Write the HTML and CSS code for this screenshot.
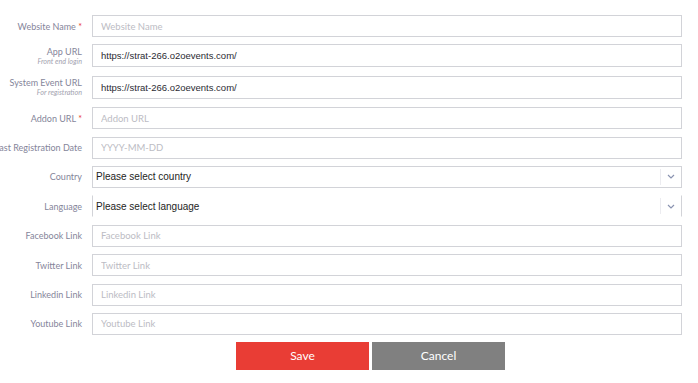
FILE: index.html
```html
<!DOCTYPE html>
<html lang="en">

<head>
    <meta charset="UTF-8">
    <meta name="viewport" content="width=device-width, initial-scale=1.0">
    <title>Website Settings</title>
    <link rel="stylesheet" href="styles.css">
</head>

<body>

    <form class="settings-form">
        <div class="form-row">
            <label class="row-label" for="websiteName"><span>Website Name <b class="req">*</b></span></label>
            <input type="text" id="websiteName" placeholder="Website Name">
        </div>

        <div class="form-row tall">
            <label class="row-label" for="appUrl">
                <span>App URL<small>Front end login</small></span>
            </label>
            <input type="text" id="appUrl" value="https://strat-266.o2oevents.com/">
        </div>

        <div class="form-row tall">
            <label class="row-label" for="eventUrl">
                <span>System Event URL<small>For registration</small></span>
            </label>
            <input type="text" id="eventUrl" value="https://strat-266.o2oevents.com/">
        </div>

        <div class="form-row">
            <label class="row-label" for="addonUrl"><span>Addon URL <b class="req">*</b></span></label>
            <input type="text" id="addonUrl" placeholder="Addon URL">
        </div>

        <div class="form-row">
            <label class="row-label" for="lastDate"><span>Last Registration Date</span></label>
            <input type="text" id="lastDate" placeholder="YYYY-MM-DD">
        </div>

        <div class="form-row">
            <label class="row-label"><span>Country</span></label>
            <div class="select-box">
                <span class="select-text">Please select country</span>
                <span class="select-arrow">
                    <svg width="8" height="5" viewBox="0 0 8 5"><path d="M1 1l3 3 3-3" fill="none" stroke="#8a93b0" stroke-width="1.2"/></svg>
                </span>
            </div>
        </div>

        <div class="form-row">
            <label class="row-label"><span>Language</span></label>
            <div class="select-box open">
                <span class="select-text">Please select language</span>
                <span class="select-arrow">
                    <svg width="8" height="5" viewBox="0 0 8 5"><path d="M1 1l3 3 3-3" fill="none" stroke="#8a93b0" stroke-width="1.2"/></svg>
                </span>
            </div>
        </div>

        <div class="form-row">
            <label class="row-label" for="facebook"><span>Facebook Link</span></label>
            <input type="text" id="facebook" placeholder="Facebook Link">
        </div>

        <div class="form-row">
            <label class="row-label" for="twitter"><span>Twitter Link</span></label>
            <input type="text" id="twitter" placeholder="Twitter Link">
        </div>

        <div class="form-row">
            <label class="row-label" for="linkedin"><span>Linkedin Link</span></label>
            <input type="text" id="linkedin" placeholder="Linkedin Link">
        </div>

        <div class="form-row">
            <label class="row-label" for="youtube"><span>Youtube Link</span></label>
            <input type="text" id="youtube" placeholder="Youtube Link">
        </div>

        <div class="form-actions">
            <button type="button" class="btn save">Save</button>
            <button type="button" class="btn cancel">Cancel</button>
        </div>
    </form>

</body>

</html>
```

FILE: styles.css
```css
body {
    margin: 0;
    background: #fff;
    font-family: 'Lato', 'Liberation Sans', sans-serif;
    overflow: hidden;
}

.settings-form {
    padding: 15px 16px 0 0;
}

.form-row {
    display: grid;
    grid-template-columns: 82px 1fr;
    column-gap: 10px;
    height: 22px;
    margin-bottom: 7.4px;
}

.form-row.tall {
    height: 24px;
}

.row-label {
    display: flex;
    justify-content: flex-end;
    align-items: center;
    white-space: nowrap;
    font-size: 9px;
    color: #85859a;
    text-align: right;
    line-height: 11px;
}

.row-label small {
    display: block;
    font-size: 7.2px;
    font-style: italic;
    color: #a3a3b0;
    line-height: 10px;
}

.req {
    font-weight: normal;
    color: #e93d35;
}

input[type="text"] {
    box-sizing: border-box;
    height: 22px;
    width: 100%;
    border: 1px solid #d2d3d8;
    padding: 0 8px;
    font-family: 'Liberation Sans', sans-serif;
    font-size: 9.5px;
    color: #2b2b33;
    outline: none;
}

.form-row.tall input[type="text"] {
    height: 23px;
}

input::placeholder {
    font-family: 'Lato', sans-serif;
    font-size: 9.5px;
    color: #bcbcc4;
}

.select-box {
    box-sizing: border-box;
    height: 22px;
    display: flex;
    align-items: center;
    border: 1px solid #d2d3d8;
    font-family: 'Liberation Sans', sans-serif;
    font-size: 10px;
    color: #1e1e24;
}

.select-box.open {
    border-top-color: #fff;
    border-bottom-color: #fff;
}

.select-text {
    flex: 1;
    padding-left: 3px;
}

.select-arrow {
    width: 20px;
    height: 16px;
    display: flex;
    align-items: center;
    justify-content: center;
    border-left: 1px solid #ececf0;
}

.form-actions {
    display: flex;
    gap: 3px;
    padding-left: 236px;
    margin-top: -0.4px;
}

.btn {
    width: 133px;
    height: 28px;
    border: none;
    color: #fff;
    font-family: 'Lato', sans-serif;
    font-size: 12px;
    cursor: pointer;
}

.btn.save {
    background-color: #e93d35;
}

.btn.cancel {
    background-color: #808080;
}
```
